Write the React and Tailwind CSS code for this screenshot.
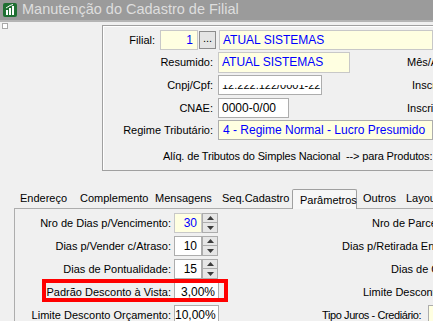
import React from "react";

const FONT = { fontFamily: '"Liberation Sans", Arial, sans-serif' };

function Spin() {
  return (
    <div className="flex flex-col w-[16px] h-[20px]">
      <div className="h-[10px] border border-[#acacac] bg-[#e6e6e6] flex items-center justify-center">
        <svg width="7" height="4" viewBox="0 0 7 4"><path d="M0 4 L3.5 0 L7 4 Z" fill="#3c3c3c" /></svg>
      </div>
      <div className="h-[10px] border border-t-0 border-[#acacac] bg-[#e6e6e6] flex items-center justify-center">
        <svg width="7" height="4" viewBox="0 0 7 4"><path d="M0 0 L3.5 4 L7 0 Z" fill="#3c3c3c" /></svg>
      </div>
    </div>
  );
}

function TabRow({ label, children, right, rightMl }) {
  return (
    <div className="flex items-center h-[20px] mt-[3px] whitespace-nowrap">
      <div className="w-[156px] shrink-0 text-right">{label}</div>
      <div className="ml-[3px] flex shrink-0">{children}</div>
      <div className={rightMl + " shrink-0"}>{right}</div>
    </div>
  );
}

export default function App() {
  return (
    <div className="relative w-[433px] h-[321px] overflow-hidden bg-[#f0f0f0] text-[11px] text-black" style={FONT}>
      {/* title bar */}
      <div className="h-[20px] bg-[#9b9b9b] flex items-center">
        <svg className="ml-[3px] shrink-0" width="14" height="14" viewBox="0 0 14 14">
          <rect x="0" y="0" width="14" height="14" rx="2" fill="#1f6f32" />
          <rect x="3" y="7" width="2" height="5" fill="#fff" />
          <rect x="6" y="5" width="2" height="7" fill="#fff" />
          <rect x="9" y="3" width="2" height="9" fill="#fff" />
          <path d="M3 5 L7 2.5 L10 1.5" stroke="#fff" strokeWidth="1" fill="none" />
        </svg>
        <span className="ml-[5px] text-[14.5px] text-[#dedede] whitespace-nowrap">
          Manutenção do Cadastro de Filial
        </span>
      </div>
      <div className="h-[2px] bg-[#b4b4b4]" />

      <div className="flex">
        {/* tiny square */}
        <div className="mt-[1px] ml-[2px] w-[6px] h-[6px] shrink-0 border border-[#a8a8a8] bg-white" />

        {/* group panel */}
        <div className="ml-[94px] mt-[3px] flex-1 min-w-0 h-[146px] border-l border-t border-b border-[#a0a0a0] shadow-[inset_1px_1px_0_#ffffff] pt-[4px] whitespace-nowrap">
          <div className="flex items-center h-[20px]">
            <div className="w-[52px] shrink-0 text-right">Filial:</div>
            <div className="ml-[5px] w-[38px] shrink-0 h-[20px] border border-[#c8c8c8] bg-[#ffffe1] text-right pr-[4px] text-[#0000ff] leading-[18px] text-[12px]">1</div>
            <div className="ml-[1px] w-[17px] shrink-0 h-[18px] border border-[#8c8c8c] bg-[#e4e4e4] text-center leading-[12px]">...</div>
            <div className="ml-[3px] flex-1 h-[20px] border border-[#c8c8c8] bg-[#ffffe1] pl-[3px] text-[#0000ff] leading-[18px] text-[12px]">ATUAL SISTEMAS</div>
          </div>
          <div className="flex items-center h-[21px] mt-[2px]">
            <div className="w-[110px] shrink-0 text-right">Resumido:</div>
            <div className="ml-[5px] w-[132px] shrink-0 h-[21px] border border-[#c8c8c8] bg-[#ffffe1] pl-[3px] text-[#0000ff] leading-[19px] text-[12px]">ATUAL SISTEMAS</div>
            <div className="ml-[57px] shrink-0">Mês/Ano Referência:</div>
          </div>
          <div className="flex items-center h-[20px] mt-[2px]">
            <div className="w-[110px] shrink-0 text-right">Cnpj/Cpf:</div>
            <div className="relative ml-[5px] w-[104px] shrink-0 h-[20px] border border-[#adadad] bg-white pl-[3px] leading-[18px] overflow-hidden">
              12.222.122/0001-22
              <div className="absolute left-0 right-0 top-0 h-[9px] bg-white" />
            </div>
            <div className="ml-[90px] shrink-0">Inscrição Estadual:</div>
          </div>
          <div className="flex items-center h-[20px] mt-[3px]">
            <div className="w-[110px] shrink-0 text-right">CNAE:</div>
            <div className="ml-[5px] w-[71px] shrink-0 h-[20px] border border-[#adadad] bg-white pl-[3px] leading-[18px] text-[12px]">0000-0/00</div>
            <div className="ml-[118px] shrink-0">Inscrição Municipal:</div>
          </div>
          <div className="flex items-center h-[20px] mt-[2px]">
            <div className="w-[110px] shrink-0 text-right">Regime Tributário:</div>
            <div className="ml-[5px] flex-1 h-[20px] border border-[#adadad] bg-[#ffffe1] pl-[4px] text-[#0000ff] leading-[18px] text-[12px]">4 - Regime Normal - Lucro Presumido</div>
          </div>
          <div className="mt-[8px] pl-[60px] tracking-[-0.15px]">Alíq. de Tributos do Simples Nacional&nbsp; --&gt; para Produtos:</div>
        </div>
      </div>

      {/* tabs */}
      <div className="flex mt-[18px] ml-[14px] h-[19px] whitespace-nowrap items-end">
        <div className="w-[60px] shrink-0 pl-[6px] pb-[2px]">Endereço</div>
        <div className="w-[75px] shrink-0 pl-[6px] pb-[2px]">Complemento</div>
        <div className="w-[67px] shrink-0 pl-[6px] pb-[2px]">Mensagens</div>
        <div className="w-[76px] shrink-0 pl-[6px] pb-[2px]">Seq.Cadastro</div>
        <div className="relative z-10 w-[65px] shrink-0 h-[20px] pl-[7px] pt-[2px] border border-b-0 border-[#a0a0a0] bg-[#f7f7f7] rounded-t-[2px] -mb-px">Parâmetros</div>
        <div className="w-[43px] shrink-0 pl-[6px] pb-[2px]">Outros</div>
        <div className="shrink-0 pl-[6px] pb-[2px]">Layout</div>
      </div>

      <div className="ml-[14px] h-[120px] border-l border-t border-[#adadad] pt-[1px] whitespace-nowrap">
        <TabRow label="Nro de Dias p/Vencimento:" right="Nro de Parcelas no Crediário:" rightMl="ml-[154px]">
          <div className="w-[28px] h-[20px] border border-[#c8c8c8] bg-[#ffffe1] text-right pr-[4px] text-[#0000ff] leading-[18px] text-[12px]">30</div>
          <Spin />
        </TabRow>
        <TabRow label="Dias p/Vender c/Atraso:" right="Dias p/Retirada Entrega:" rightMl="ml-[124px]">
          <div className="w-[28px] h-[20px] border border-[#adadad] bg-white text-right pr-[4px] leading-[18px] text-[12px]">10</div>
          <Spin />
        </TabRow>
        <TabRow label="Dias de Pontualidade:" right="Dias de Carência:" rightMl="ml-[173px]">
          <div className="w-[28px] h-[20px] border border-[#adadad] bg-white text-right pr-[4px] leading-[18px] text-[12px]">15</div>
          <Spin />
        </TabRow>
        <TabRow label="Padrão Desconto à Vista:" right="Limite Desconto Pedido:" rightMl="ml-[144px]">
          <div className="w-[45px] h-[20px] border border-[#adadad] bg-white text-right pr-[3px] leading-[18px] text-[12px]">3,00%</div>
        </TabRow>
        <TabRow label="Limite Desconto Orçamento:" right="Tipo Juros - Crediário:" rightMl="ml-[103px] tracking-[-0.4px]">
          <div className="w-[45px] h-[20px] border border-[#adadad] bg-white text-right pr-[3px] leading-[18px] text-[12px]">10,00%</div>
        </TabRow>
      </div>

      {/* yellow box cut at right edge */}
      <div className="absolute left-[428px] top-[305px] w-[20px] h-[20px] border border-[#adadad] bg-[#ffffe1]" />

      {/* red highlight */}
      <div className="absolute left-[42px] top-[279px] w-[186px] h-[23px] border-4 border-[#ff0000]" />
    </div>
  );
}
